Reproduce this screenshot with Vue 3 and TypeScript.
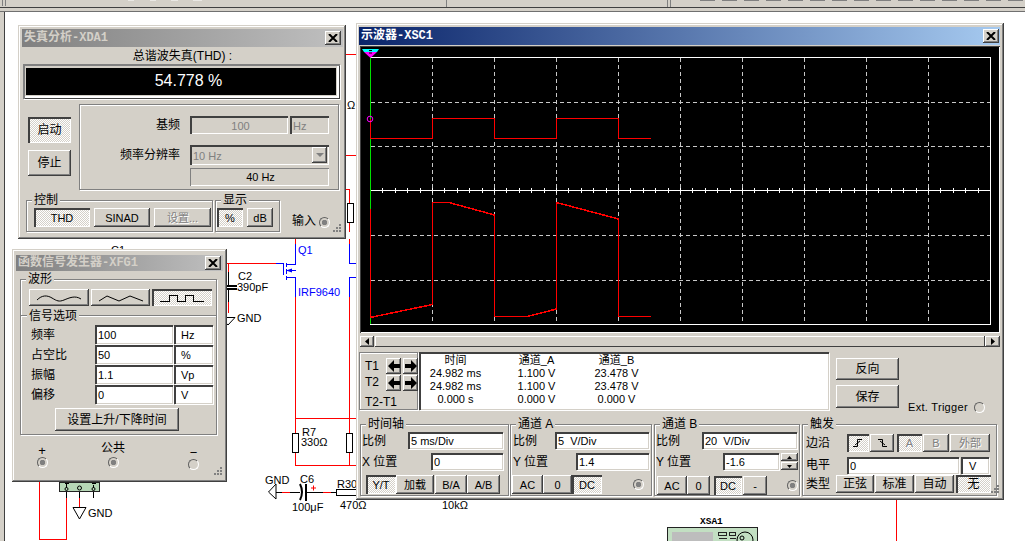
<template>
  <div class="desktop">
    <div class="toolbar">
      <svg class="toolbar-marks" width="1025" height="7" viewBox="0 0 1025 7">
        <path d="M2.5 0V6M5.5 0V6M446.5 0V7M667.5 0V7M670.5 0V7" stroke="#808080" fill="none" />
        <path d="M128 0H134M150 0H156M171 0H178M193 0H202" stroke="#fff" fill="none" />
        <path d="M700 .5H1025" stroke="#808080" stroke-dasharray="15 7" fill="none" />
      </svg>
      <div class="toolbar-band"></div>
    </div>
    <div class="work">
      <div class="rail"></div>
      <div class="canvas"></div>
    </div>

    <!-- schematic behind the instrument windows -->
    <svg class="schematic" width="1025" height="541" viewBox="0 0 1025 541">
      <g fill="none" shape-rendering="crispEdges">
        <path :d="redWires" stroke="#f00" />
        <path :d="blackWires" stroke="#000" />
        <path :d="blueWires" stroke="#00f" />
        <path d="M219 285.5H237M219 288.5H237" stroke="#000" stroke-width="2" />
        <rect x="292.5" y="433.5" width="6" height="19" stroke="#000" fill="#fff" />
        <rect x="346.5" y="433.5" width="6" height="19" stroke="#000" fill="#fff" />
        <rect x="347.5" y="203.5" width="6" height="19" stroke="#000" fill="#fff" />
        <rect x="336.5" y="489.5" width="24" height="6" stroke="#000" fill="#fff" />
        <rect x="59.5" y="482.5" width="40" height="9" stroke="#222" fill="#b6d7b6" />
        <rect x="667.5" y="527.5" width="90" height="20" stroke="#222" fill="#c2dfc2" />
        <rect x="672" y="532" width="41" height="12" fill="#bdbdbd" />
        <path d="M718.5 532.5H726.5V535.5H718.5ZM729.5 532.5H735.5V535.5H729.5ZM718.5 538.5H726.5M729.5 538.5H735.5" stroke="#222" />
        <path d="M64.5 483.5H68.5M66.5 483V488M91.5 483.5H95.5M93.5 485V488" stroke="#000" />
      </g>
      <g fill="none" stroke="#000">
        <path d="M221 317.5H235L228 325Z" />
        <path d="M73 507.5H86L79.5 519Z" />
        <path d="M276 484L268.5 492L276 499Z" />
        <path d="M300 484Q304 492 300 500" stroke-width="2" />
        <path d="M306 484V501" stroke-width="2" />
        <circle cx="745" cy="540" r="8" />
        <circle cx="742" cy="538" r="2" />
        <circle cx="66.5" cy="489" r="1.5" />
        <circle cx="79.5" cy="488" r="2" />
        <circle cx="93.5" cy="489" r="1.5" />
      </g>
      <path d="M311 488H316M313.5 485.5V490.5" stroke="#f00" />
      <path d="M286 270.5L292 268.5V272.5Z" fill="#00f" />
      <g class="sch-text">
        <text x="111" y="254">C1</text>
        <text x="347" y="109">Ω</text>
        <text x="238" y="280">C2</text>
        <text x="237" y="291">390pF</text>
        <text x="237" y="322">GND</text>
        <text x="88" y="517">GND</text>
        <text x="302" y="436">R7</text>
        <text x="301" y="446">330Ω</text>
        <text x="265" y="484">GND</text>
        <text x="300" y="483">C6</text>
        <text x="292" y="511">100μF</text>
        <text x="337" y="488">R30</text>
        <text x="340" y="509">470Ω</text>
        <text x="442" y="509">10kΩ</text>
      </g>
      <g class="sch-text blue">
        <text x="298" y="254">Q1</text>
        <text x="298" y="296">IRF9640</text>
      </g>
      <text class="part-name" x="700" y="524">XSA1</text>
    </svg>

    <!-- distortion analyser -->
    <section class="win win-xda">
      <header class="title inactive">
        <span>失真分析-XDA1</span>
        <button class="close">
          <svg width="10" height="8" viewBox="0 0 10 8"><path d="M1 0L9 8M9 0L1 8" stroke="#000" stroke-width="2" /></svg>
        </button>
      </header>
      <div class="thd-label">总谐波失真(THD) :</div>
      <div class="thd-display"><div class="thd-value">54.778 %</div></div>

      <div class="xda-mid">
        <div class="run-col">
          <button class="btn on run-btn">启动</button>
          <button class="btn run-btn">停止</button>
        </div>
        <div class="etched freq-panel">
          <div class="freq-row">
            <span class="freq-label">基频</span>
            <span class="field dis fund">100</span>
            <span class="field dis hz">Hz</span>
          </div>
          <div class="freq-row res-row">
            <span class="freq-label">频率分辨率</span>
            <span class="field dis select">10 Hz
              <span class="drop">
                <svg width="8" height="4" viewBox="0 0 8 4"><path d="M0 0H8L4 4Z" fill="#808080" /></svg>
              </span>
            </span>
          </div>
          <div class="res-out">40 Hz</div>
        </div>
      </div>

      <div class="xda-bottom">
        <fieldset class="etched grp grp-ctl">
          <span class="legend">控制</span>
          <button class="btn on b56">THD</button>
          <button class="btn b56">SINAD</button>
          <button class="btn dis b57">设置...</button>
        </fieldset>
        <fieldset class="etched grp grp-show">
          <span class="legend">显示</span>
          <button class="btn on b26">%</button>
          <button class="btn b26">dB</button>
        </fieldset>
        <span class="input-lab">输入</span>
        <i class="term on"></i>
      </div>
      <svg class="grip" width="11" height="11" viewBox="0 0 11 11"><path :d="gripDots" fill="#808080" /></svg>
    </section>

    <!-- function generator -->
    <section class="win win-xfg">
      <header class="title inactive">
        <span>函数信号发生器-XFG1</span>
        <button class="close">
          <svg width="10" height="8" viewBox="0 0 10 8"><path d="M1 0L9 8M9 0L1 8" stroke="#000" stroke-width="2" /></svg>
        </button>
      </header>
      <div class="etched wave-box">
        <span class="legend">波形</span>
        <div class="wave-row">
          <button class="btn wave">
            <svg width="46" height="10" viewBox="0 0 46 10"><path d="M1 7C6 2 11 2 16 5S23 9 28 7S39 2 45 6" fill="none" stroke="#000" /></svg>
          </button>
          <button class="btn wave b59">
            <svg width="46" height="10" viewBox="0 0 46 10"><path d="M1 8L9 3L21 8L32 3L45 8" fill="none" stroke="#000" /></svg>
          </button>
          <button class="btn wave on">
            <svg width="46" height="10" viewBox="0 0 46 10"><path d="M1 8.5H10.5V2.5H18.5V8.5H26.5V2.5H34.5V8.5H45" fill="none" stroke="#000" shape-rendering="crispEdges" /></svg>
          </button>
        </div>
        <div class="divider"><span class="legend">信号选项</span></div>
        <div class="sig-rows">
          <div v-for="r in signalRows" :key="r.label" class="sig-row">
            <span class="sig-label">{{ r.label }}</span>
            <span class="field val sig-val">{{ r.value }}</span>
            <span class="field val sig-unit">{{ r.unit }}</span>
          </div>
        </div>
        <button class="btn rise-btn">设置上升/下降时间</button>
      </div>
      <div class="term-row">
        <div class="term-col c-plus"><span class="t-lab">+</span><i class="term on"></i></div>
        <div class="term-col c-com"><span class="t-lab com">公共</span><i class="term on"></i></div>
        <div class="term-col c-minus"><span class="t-lab minus">−</span><i class="term"></i></div>
      </div>
      <svg class="grip" width="11" height="11" viewBox="0 0 11 11"><path :d="gripDots" fill="#808080" /></svg>
    </section>

    <!-- oscilloscope -->
    <section class="win win-xsc">
      <header class="title active">
        <span>示波器-XSC1</span>
        <button class="close">
          <svg width="10" height="8" viewBox="0 0 10 8"><path d="M1 0L9 8M9 0L1 8" stroke="#000" stroke-width="2" /></svg>
        </button>
      </header>

      <div class="screen-frame">
        <svg class="screen" width="638" height="285" viewBox="361 47 638 285">
          <rect x="361" y="47" width="638" height="285" fill="#000" />
          <g shape-rendering="crispEdges" fill="none">
            <path :d="gridDashes" stroke="#c8c8c8" stroke-dasharray="4 3" />
            <path d="M370 57.5H990.5V324.5H370" stroke="#fff" />
            <path d="M370 190.5H990" stroke="#fff" />
            <path :d="axisTicks" stroke="#fff" />
            <path d="M370.5 57V324" stroke="#00e000" />
            <path d="M370.5 119V138M370 138.5H432.5V118.5H494.5V138.5H556.5V118.5H618.5V138.5H651" stroke="#f00" stroke-width="1.5" />
            <path :d="channelB" stroke="#f00" stroke-width="1.5" />
            <path d="M370.5 209V317" stroke="#f00" stroke-width="1.5" />
          </g>
          <path d="M362 49H379L377 52H364Z" fill="#00ffff" />
          <path d="M364 52H377L370.5 58Z" fill="#ff00ff" />
          <path d="M369 50.5H372M369 53H372" stroke="#000" />
          <circle cx="370" cy="119" r="2.8" fill="none" stroke="#ff00ff" />
        </svg>
      </div>

      <div class="hscroll">
        <button class="btn sb">
          <svg width="4" height="7" viewBox="0 0 4 7"><path d="M4 0V7L0 3.5Z" /></svg>
        </button>
        <div class="thumb"></div>
        <button class="btn sb sb-r">
          <svg width="4" height="7" viewBox="0 0 4 7"><path d="M0 0V7L4 3.5Z" /></svg>
        </button>
      </div>

      <div class="meas-row">
        <div class="etched t-box">
          <span>T1</span>
          <button class="btn arrow"><svg width="12" height="12" viewBox="0 0 12 12"><path d="M0 6L6 0V4H12V8H6V12Z" /></svg></button>
          <button class="btn arrow"><svg width="12" height="12" viewBox="0 0 12 12"><path d="M12 6L6 0V4H0V8H6V12Z" /></svg></button>
          <span class="t2">T2</span>
          <button class="btn arrow"><svg width="12" height="12" viewBox="0 0 12 12"><path d="M0 6L6 0V4H12V8H6V12Z" /></svg></button>
          <button class="btn arrow"><svg width="12" height="12" viewBox="0 0 12 12"><path d="M12 6L6 0V4H0V8H6V12Z" /></svg></button>
          <span class="t-diff">T2-T1</span>
        </div>
        <div class="readout">
          <template v-for="row in readout" :key="row[0]">
            <span v-for="(cell, i) in row" :key="i">{{ cell }}</span>
          </template>
        </div>
        <div class="action-col">
          <button class="btn act">反向</button>
          <button class="btn act tall">保存</button>
        </div>
        <span class="ext-lab">Ext. Trigger</span>
        <i class="term ext"></i>
      </div>

      <div class="ctl-row">
        <fieldset class="etched ctl g-time">
          <span class="legend">时间轴</span>
          <div class="ctl-line">
            <span class="l46">比例</span>
            <span class="field val f95">5 ms/Div</span>
          </div>
          <div class="ctl-line second">
            <span class="l69">X 位置</span>
            <span class="field val f72">0</span>
          </div>
          <div class="ctl-btns indent4">
            <button class="btn on b30">Y/T</button>
            <button class="btn b38">加载</button>
            <button class="btn b32 ml1">B/A</button>
            <button class="btn b33">A/B</button>
          </div>
        </fieldset>

        <fieldset class="etched ctl g-a">
          <span class="legend">通道 A</span>
          <div class="ctl-line">
            <span class="l42">比例</span>
            <span class="field val f94">5&nbsp; V/Div</span>
          </div>
          <div class="ctl-line second">
            <span class="l63">Y 位置</span>
            <span class="field val f73">1.4</span>
          </div>
          <div class="ctl-btns outdent1">
            <button class="btn b31">AC</button>
            <button class="btn b29">0</button>
            <button class="btn on b30">DC</button>
            <i class="term on t-a"></i>
          </div>
        </fieldset>

        <fieldset class="etched ctl g-b">
          <span class="legend">通道 B</span>
          <div class="ctl-line">
            <span class="l46">比例</span>
            <span class="field val f95">20&nbsp; V/Div</span>
          </div>
          <div class="ctl-line second">
            <span class="l67">Y 位置</span>
            <span class="field val f56">-1.6</span>
            <span class="spin">
              <button class="btn spin-btn"><svg width="5" height="3" viewBox="0 0 5 3"><path d="M2.5 0L5 3H0Z" /></svg></button>
              <button class="btn spin-btn"><svg width="5" height="3" viewBox="0 0 5 3"><path d="M2.5 3L5 0H0Z" /></svg></button>
            </span>
          </div>
          <div class="ctl-btns indent1 low">
            <button class="btn b30">AC</button>
            <button class="btn b23">0</button>
            <button class="btn on b28 ml4">DC</button>
            <button class="btn b24 ml1">-</button>
            <i class="term on t-b"></i>
          </div>
        </fieldset>

        <fieldset class="etched ctl g-trig">
          <span class="legend">触发</span>
          <div class="trig-line edge">
            <span class="l41">边沿</span>
            <button class="btn on tb b22">
              <svg width="10" height="10" viewBox="0 0 10 10"><path d="M0 8.5H4.5V1.5H9M2 7L7 3" fill="none" stroke="#000" /></svg>
            </button>
            <button class="btn tb b24 ml1">
              <svg width="10" height="10" viewBox="0 0 10 10"><path d="M1 1.5H5.5V8.5H10M3 3L8 7" fill="none" stroke="#000" /></svg>
            </button>
            <button class="btn on dis tb b25 ml3">A</button>
            <button class="btn dis tb b26 ml1">B</button>
            <button class="btn dis tb b40 ml1">外部</button>
          </div>
          <div class="trig-line level">
            <span class="l41">电平</span>
            <span class="field val f112">0</span>
            <span class="field val f28">V</span>
          </div>
          <div class="trig-line kind">
            <span class="l30">类型</span>
            <button class="btn b38">正弦</button>
            <button class="btn b39 ml1">标准</button>
            <button class="btn b39 ml1">自动</button>
            <button class="btn on b35 ml2">无</button>
          </div>
        </fieldset>
      </div>
      <svg class="grip" width="11" height="11" viewBox="0 0 11 11"><path :d="gripDots" fill="#808080" /></svg>
    </section>
  </div>
</template>

<script setup lang="ts">
const signalRows = [
  { label: '频率', value: '100', unit: 'Hz' },
  { label: '占空比', value: '50', unit: '%' },
  { label: '振幅', value: '1.1', unit: 'Vp' },
  { label: '偏移', value: '0', unit: 'V' },
]

const readout = [
  ['时间', '通道_A', '通道_B'],
  ['24.982 ms', '1.100 V', '23.478 V'],
  ['24.982 ms', '1.100 V', '23.478 V'],
  ['0.000 s', '0.000 V', '0.000 V'],
]

const redWires = [
  'M39.5 482V539.5H66.5V498M79.5 498V507',
  'M227 263.5H276M228.5 263V272M228.5 302V313',
  'M295.5 232V244M295.5 297V433M295.5 452V465.5H356M295 418.5H356',
  'M349.5 239V244M349.5 297V433M349.5 452V465',
  'M349.5 189V203M349.5 222V232M346 189.5H350M346 54.5H356M346 155.5H356',
  'M282 492.5H290M323 492.5H331',
  'M896.5 500V541',
].join('')

const blackWires = [
  'M66.5 491V498M79.5 491V498M93.5 491V498',
  'M228.5 272V285M228.5 289V302',
  'M276 492.5H282M290 492.5H300M306 492.5H323M331 492.5H336',
].join('')

const blueWires = [
  'M276 263.5H283.5V275M286.5 263V267M286.5 269V274M286.5 276V280',
  'M286 264.5H295.5V244M286 270.5H295.5M286 277.5H295.5V297',
  'M349.5 244V263.5H356M349.5 297V277.5H356',
].join('')

const gridX = [432, 494, 556, 618, 680, 742, 804, 866, 928]
const gridY = [102, 146, 235, 280]

const gridDashes =
  gridX.map((x) => `M${x + 0.5} 58V324`).join('') + gridY.map((y) => `M371 ${y + 0.5}H990`).join('')

const axisTicks = Array.from({ length: 51 }, (_, i) => {
  const x = Math.round(370 + i * 12.4) + 0.5
  return `M${x} 188V193`
}).join('')

const channelB = 'M370 317.5L432.5 304.5V202.5H449L494.5 215V316.5H527L556.5 309V202.5L618.5 219V316.5H651'

// triangle of dots in the corner of a resizable window
const gripDots = [
  [8, 0],
  [5, 3],
  [8, 3],
  [2, 6],
  [5, 6],
  [8, 6],
]
  .map(([x, y]) => `M${x} ${y}h2v2h-2z`)
  .join('')
</script>

<style>
html,
body {
  margin: 0;
  background: #fff;
  overflow: hidden;
}
</style>

<style scoped>
* {
  box-sizing: border-box;
}

.desktop {
  position: relative;
  width: 1025px;
  height: 541px;
  overflow: hidden;
  background: #fff;
  font-family: 'Liberation Sans', 'Noto Sans CJK SC', sans-serif;
  font-size: 12px;
  line-height: 14px;
  color: #000;
}

.toolbar {
  background: #d4d0c8;
}
.toolbar-marks {
  display: block;
}
.toolbar-band {
  height: 5px;
  border-top: 1px solid #404040;
  border-bottom: 1px solid #707070;
}
.work {
  display: flex;
  height: 529px;
}
.rail {
  width: 5px;
  background: #d4d0c8;
  border-right: 1px solid #404040;
}
.canvas {
  flex: 1;
}

.schematic {
  position: absolute;
  left: 0;
  top: 0;
}
.sch-text text,
.part-name {
  font-family: 'Liberation Sans', sans-serif;
  font-size: 11px;
}
.sch-text.blue text {
  fill: #00f;
}
.part-name {
  font-family: 'Liberation Mono', monospace;
  font-weight: bold;
  font-size: 9.5px;
}

.win {
  position: absolute;
  background: #d4d0c8;
  box-shadow: inset -1px -1px 0 #404040, inset 1px 1px 0 #d4d0c8, inset -2px -2px 0 #808080, inset 2px 2px 0 #fff;
}
.win-xda {
  left: 18px;
  top: 25px;
  width: 328px;
  height: 214px;
  padding: 4px 3px 0 4px;
}
.win-xfg {
  left: 12px;
  top: 249px;
  width: 215px;
  height: 233px;
  padding: 6px 4px 0 4px;
}
.win-xsc {
  left: 356px;
  top: 23px;
  width: 648px;
  height: 477px;
  padding: 4px 4px 0 3px;
}

.title {
  display: flex;
  align-items: center;
  justify-content: space-between;
  height: 18px;
  padding: 0 2px 0 2px;
  font-family: 'Liberation Mono', 'Noto Sans CJK SC', monospace;
  font-weight: bold;
  font-size: 12px;
}
.title.inactive {
  background: linear-gradient(90deg, #808080, #c0c0c0);
  color: #d4d0c8;
}
.title.active {
  background: linear-gradient(90deg, #0a246a, #a6caf0);
  color: #fff;
  padding-right: 1px;
}
.win-xfg .title {
  height: 16px;
}

button {
  font: inherit;
  color: inherit;
  padding: 0;
  margin: 0;
  border: 0;
  background: #d4d0c8;
}
fieldset {
  margin: 0;
  padding: 0;
  border: 0;
  min-width: 0;
}

.close,
.btn {
  display: flex;
  align-items: center;
  justify-content: center;
  flex: none;
  background: #d4d0c8;
  box-shadow: inset -1px -1px 0 #404040, inset 1px 1px 0 #fff, inset -2px -2px 0 #808080;
}
.close {
  width: 16px;
  height: 14px;
}
.btn.on {
  background: repeating-conic-gradient(#fff 0 25%, #d4d0c8 0 50%) 0 0 / 2px 2px;
  box-shadow: inset 2px 2px 0 #404040, inset -1px -1px 0 #fff;
}
.btn.dis {
  color: #808080;
  text-shadow: 1px 1px 0 #fff;
}

/* button widths and small gaps of the instrument panels */
.b22 { width: 22px; }
.b23 { width: 23px; }
.b24 { width: 24px; }
.b25 { width: 25px; }
.b26 { width: 26px; }
.b28 { width: 28px; }
.b29 { width: 29px; }
.b30 { width: 30px; }
.b31 { width: 31px; }
.b32 { width: 32px; }
.b33 { width: 33px; }
.b35 { width: 35px; }
.b38 { width: 38px; }
.b39 { width: 39px; }
.b40 { width: 40px; }
.b56 { width: 56px; }
.b57 { width: 57px; }
.ml1 { margin-left: 1px; }
.ml2 { margin-left: 2px; }
.ml3 { margin-left: 3px; }
.ml4 { margin-left: 4px; }

.etched {
  position: relative;
  border: 1px solid #808080;
  box-shadow: 1px 1px 0 #fff, inset 1px 1px 0 #fff;
}
.legend {
  position: absolute;
  left: 5px;
  top: -7px;
  padding: 0 2px;
  background: #d4d0c8;
  line-height: 13px;
}

.field {
  display: flex;
  align-items: center;
  flex: none;
  padding: 1px 0 0 3px;
  font-size: 11px;
  box-shadow: inset 2px 2px 0 #404040, inset -1px -1px 0 #fff;
}
.field.val {
  background: #fff;
  box-shadow: inset 2px 2px 0 #404040, inset -1px -1px 0 #d4d0c8, 1px 1px 0 #fff;
}
.field.dis {
  color: #808080;
}

.term {
  display: block;
  flex: none;
  width: 11px;
  height: 11px;
  border-radius: 50%;
  border: 1px solid;
  border-color: #606060 #fff #fff #606060;
}
.term.on {
  background: radial-gradient(circle, #808080 0 2.5px, #d4d0c8 3px);
}

.grip {
  position: absolute;
  right: 4px;
  bottom: 4px;
}

/* distortion analyser */
.thd-label {
  height: 17px;
  line-height: 19px;
  text-align: center;
}
.thd-display {
  height: 35px;
  margin: 0 3px 0 1px;
  padding: 4px 4px 4px 3px;
  box-shadow: inset 2px 2px 0 #808080, inset -1px -1px 0 #404040, inset -3px -3px 0 #fff, 1px 1px 0 #fff;
}
.thd-value {
  height: 27px;
  padding-left: 15px;
  background: #000;
  color: #fff;
  font-size: 16px;
  line-height: 26px;
  text-align: center;
}
.xda-mid {
  display: flex;
  margin-top: 5px;
}
.run-col {
  display: flex;
  flex-direction: column;
  gap: 7px;
  width: 57px;
  padding: 13px 0 0 6px;
}
.run-btn {
  width: 43px;
  height: 26px;
}
.freq-panel {
  width: 260px;
  height: 86px;
  padding-top: 11px;
}
.freq-row {
  display: flex;
  align-items: center;
  height: 18px;
}
.res-row {
  height: 20px;
  margin-top: 11px;
}
.freq-label {
  width: 100px;
  margin-right: 10px;
  text-align: right;
}
.fund {
  width: 98px;
  height: 18px;
  justify-content: center;
  font-size: 11px;
}
.hz {
  width: 39px;
  height: 18px;
  margin-left: 2px;
  color: #808080;
}
.select {
  position: relative;
  width: 139px;
  height: 20px;
}
.drop {
  position: absolute;
  right: 2px;
  top: 2px;
  display: flex;
  align-items: center;
  justify-content: center;
  width: 15px;
  height: 16px;
  box-shadow: inset -1px -1px 0 #404040, inset 1px 1px 0 #fff, inset -2px -2px 0 #808080;
}
.res-out {
  width: 139px;
  height: 18px;
  margin: 3px 0 0 110px;
  font-size: 11px;
  line-height: 18px;
  text-align: center;
  padding-left: 2px;
  box-shadow: inset 1px 1px 0 #808080, inset -1px -1px 0 #fff;
}
.xda-bottom {
  display: flex;
  align-items: flex-end;
  margin-top: 10px;
  padding-left: 4px;
}
.grp {
  display: flex;
  gap: 4px;
  height: 32px;
  padding: 7px 0 0 7px;
}
.grp .btn {
  height: 19px;
  font-size: 11px;
}
.grp-ctl {
  width: 187px;
}
.grp-show {
  width: 65px;
  margin-left: 2px;
  padding-left: 1px;
}
.input-lab {
  margin: 0 3px 4px 12px;
}
.xda-bottom .term {
  margin: 0 0 4px 0;
}

/* function generator */
.wave-box {
  width: 197px;
  height: 156px;
  margin: 8px 0 0 4px;
}
.wave-row {
  display: flex;
  gap: 2px;
  padding: 9px 0 0 8px;
}
.wave {
  width: 60px;
  height: 17px;
}
.wave.b59 {
  width: 59px;
}
.divider {
  position: relative;
  height: 2px;
  margin-top: 9px;
  border-top: 1px solid #808080;
  border-bottom: 1px solid #fff;
}
.divider .legend {
  left: 6px;
  top: -6px;
}
.sig-rows {
  display: flex;
  flex-direction: column;
  gap: 1px;
  padding: 8px 0 0 10px;
}
.sig-row {
  display: flex;
  align-items: center;
  height: 19px;
}
.sig-label {
  width: 64px;
}
.sig-val {
  width: 78px;
  height: 19px;
}
.sig-unit {
  width: 39px;
  height: 19px;
  margin-left: 1px;
  padding-left: 7px;
}
.rise-btn {
  width: 124px;
  height: 23px;
  margin: 4px 0 0 34px;
}
.term-row {
  display: flex;
  margin-top: 6px;
}
.term-col {
  display: flex;
  flex: none;
  flex-direction: column;
  align-items: center;
}
.c-plus {
  width: 52px;
  padding-top: 4px;
}
.c-com {
  width: 90px;
}
.c-minus {
  width: 65px;
  margin-left: 5px;
  padding-top: 7px;
  transform: translateX(-2px);
}
.t-lab {
  height: 12px;
  line-height: 12px;
  font-size: 13px;
}
.t-lab.com {
  height: 16px;
  line-height: 14px;
  font-size: 12px;
}
.t-lab.minus {
  height: 11px;
  line-height: 10px;
}

/* oscilloscope */
.screen-frame {
  width: 640px;
  height: 287px;
  margin: 1px 0 0 1px;
  padding: 1px;
  box-shadow: inset 1px 1px 0 #404040, inset -1px -1px 0 #fff;
}
.screen {
  display: block;
}
.hscroll {
  display: flex;
  width: 640px;
  height: 11px;
  margin: 3px 0 0 1px;
}
.sb {
  width: 14px;
}
.sb-r {
  width: 15px;
}
.thumb {
  flex: 1;
  margin-left: 1px;
  box-shadow: inset -1px -1px 0 #404040, inset 1px 1px 0 #fff;
}
.meas-row {
  position: relative;
  display: flex;
  height: 58px;
  margin-top: 5px;
}
.t-box {
  display: grid;
  grid-template-columns: 19px 15px 15px;
  grid-auto-rows: 16px;
  column-gap: 2px;
  row-gap: 1px;
  align-items: center;
  width: 59px;
  padding: 5px 0 0 5px;
}
.t2 {
  margin-bottom: 3px;
}
.t-diff {
  grid-column: 1 / 4;
  margin-top: 3px;
}
.arrow {
  height: 16px;
}
.readout {
  display: grid;
  grid-template-columns: 73px 89px 71px;
  grid-auto-rows: 13px;
  align-content: start;
  width: 410px;
  margin-left: 1px;
  padding-top: 2px;
  font-size: 11px;
  line-height: 13px;
  text-align: center;
  background: #fff;
  box-shadow: inset 2px 2px 0 #404040, inset -1px -1px 0 #d4d0c8, 1px 1px 0 #fff;
}
.action-col {
  display: flex;
  flex-direction: column;
  gap: 5px;
  width: 63px;
  margin-left: 7px;
  padding-top: 6px;
}
.act {
  width: 63px;
  height: 22px;
}
.act.tall {
  height: 23px;
}
.ext-lab {
  align-self: flex-end;
  margin: 0 0 -4px 9px;
  font-size: 11px;
  line-height: 14px;
  letter-spacing: 0.3px;
}
.term.ext {
  align-self: flex-end;
  margin: 0 0 -3px 6px;
}
.ctl-row {
  display: flex;
  margin: 14px 0 0 1px;
}
.ctl {
  height: 72px;
  padding-top: 7px;
}
.g-time {
  width: 149px;
  padding-left: 1px;
}
.g-a {
  width: 142px;
  margin-left: 1px;
  padding-left: 2px;
}
.g-b {
  width: 146px;
  margin-left: 2px;
  padding-left: 1px;
}
.g-trig {
  width: 195px;
  margin-left: 2px;
  padding-left: 3px;
}
.ctl-line,
.trig-line {
  display: flex;
  align-items: center;
  height: 17px;
}
.ctl-line .field,
.trig-line .field {
  height: 17px;
}
.second {
  margin-top: 4px;
}
.ctl-btns {
  display: flex;
  align-items: center;
  height: 19px;
  margin-top: 5px;
  font-size: 11px;
}
.ctl-btns .btn {
  height: 19px;
}
.indent4 {
  margin-left: 4px;
}
.outdent1 {
  margin-left: -1px;
}
.indent1 {
  margin-left: 1px;
}
.low {
  margin-top: 6px;
}
.l46 {
  width: 46px;
}
.l42 {
  width: 42px;
}
.l41 {
  width: 41px;
}
.l30 {
  width: 30px;
}
.l69 {
  width: 69px;
}
.l63 {
  width: 63px;
}
.l67 {
  width: 67px;
}
.f95 {
  width: 95px;
}
.f94 {
  width: 94px;
}
.f72 {
  width: 72px;
}
.f73 {
  width: 73px;
}
.f56 {
  width: 56px;
}
.f112 {
  width: 112px;
}
.f28 {
  width: 28px;
  margin-left: 2px;
  padding-left: 8px;
}
.spin {
  display: flex;
  flex-direction: column;
  justify-content: space-between;
  width: 17px;
  height: 17px;
  margin-left: 2px;
}
.spin-btn {
  width: 17px;
  height: 8px;
}
.t-a {
  margin-left: 31px;
}
.t-b {
  margin-left: 20px;
}
.trig-line {
  height: 18px;
  font-size: 12px;
}
.trig-line .btn {
  height: 18px;
}
.tb {
  font-size: 11px;
}
.edge {
  margin-top: 2px;
}
.level {
  margin-top: 4px;
}
.kind {
  margin-top: 1px;
}
</style>
